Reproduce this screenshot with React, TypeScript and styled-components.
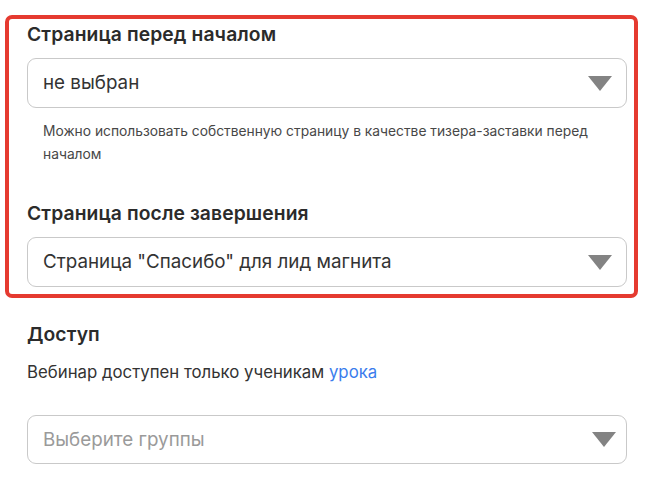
import React from "react";
import styled, { createGlobalStyle } from "styled-components";

const Global = createGlobalStyle`
  html, body { margin: 0; padding: 0; background: #ffffff; }
  body { font-family: Inter, "Noto Sans", sans-serif; color: #2b2b2b; }
  * { box-sizing: border-box; }
`;

const Page = styled.div`
  width: 654px;
  padding: 15px 0 0 27px;
  display: flex;
  flex-direction: column;
`;

const Column = styled.div`
  width: 600px;
  display: flex;
  flex-direction: column;
`;

const Highlight = styled.div`
  margin: 0 -11px 0 -22px;
  border: 4px solid #e53a30;
  border-radius: 7px;
  padding: 3px 7px 7px 18px;
  display: flex;
  flex-direction: column;
`;

const Field = styled.div<{ $gap?: number }>`
  display: flex;
  flex-direction: column;
  margin-top: ${(p) => p.$gap ?? 0}px;
`;

const Title = styled.div`
  font-size: 19.3px;
  line-height: 24px;
  font-weight: 600;
  letter-spacing: 0.1px;
  color: #2b2b2b;
`;

const Select = styled.div<{ $h?: number; $arrowRight?: number; $gap?: number }>`
  height: ${(p) => p.$h ?? 50}px;
  margin-top: ${(p) => p.$gap ?? 12}px;
  border: 1px solid #c9c9c9;
  border-radius: 9px;
  padding: 0 ${(p) => p.$arrowRight ?? 14}px 0 15px;
  display: flex;
  align-items: center;
  justify-content: space-between;
  background: #fff;
`;

const Value = styled.span<{ $placeholder?: boolean }>`
  font-size: 18.8px;
  line-height: 24px;
  color: ${(p) => (p.$placeholder ? "#9a9a9a" : "#333333")};
`;

const Arrow = () => (
  <svg width="24" height="15" viewBox="0 0 24 15">
    <path d="M0 0 H24 L12 15 Z" fill="#838383" />
  </svg>
);

const Help = styled.div`
  margin-top: 12px;
  padding-left: 16px;
  font-size: 13.8px;
  line-height: 23px;
  color: #474747;
`;

const Description = styled.div`
  margin-top: 14px;
  font-size: 16.8px;
  line-height: 24px;
  color: #333333;
`;

const Link = styled.a`
  color: #3b7ded;
  text-decoration: none;
`;

export default function App() {
  return (
    <>
      <Global />
      <Page>
        <Column>
          <Highlight>
            <Field>
              <Title>Страница перед началом</Title>
              <Select>
                <Value>не выбран</Value>
                <Arrow />
              </Select>
              <Help>
                Можно использовать собственную страницу в качестве тизера-заставки перед началом
              </Help>
            </Field>
            <Field $gap={35}>
              <Title>Страница после завершения</Title>
              <Select $gap={12}>
                <Value>Страница "Спасибо" для лид магнита</Value>
                <Arrow />
              </Select>
            </Field>
          </Highlight>
          <Field $gap={24}>
            <Title>Доступ</Title>
            <Description>
              Вебинар доступен только ученикам <Link href="#">урока</Link>
            </Description>
            <Select $gap={31} $h={49} $arrowRight={10}>
              <Value $placeholder>Выберите группы</Value>
              <Arrow />
            </Select>
          </Field>
        </Column>
      </Page>
    </>
  );
}
